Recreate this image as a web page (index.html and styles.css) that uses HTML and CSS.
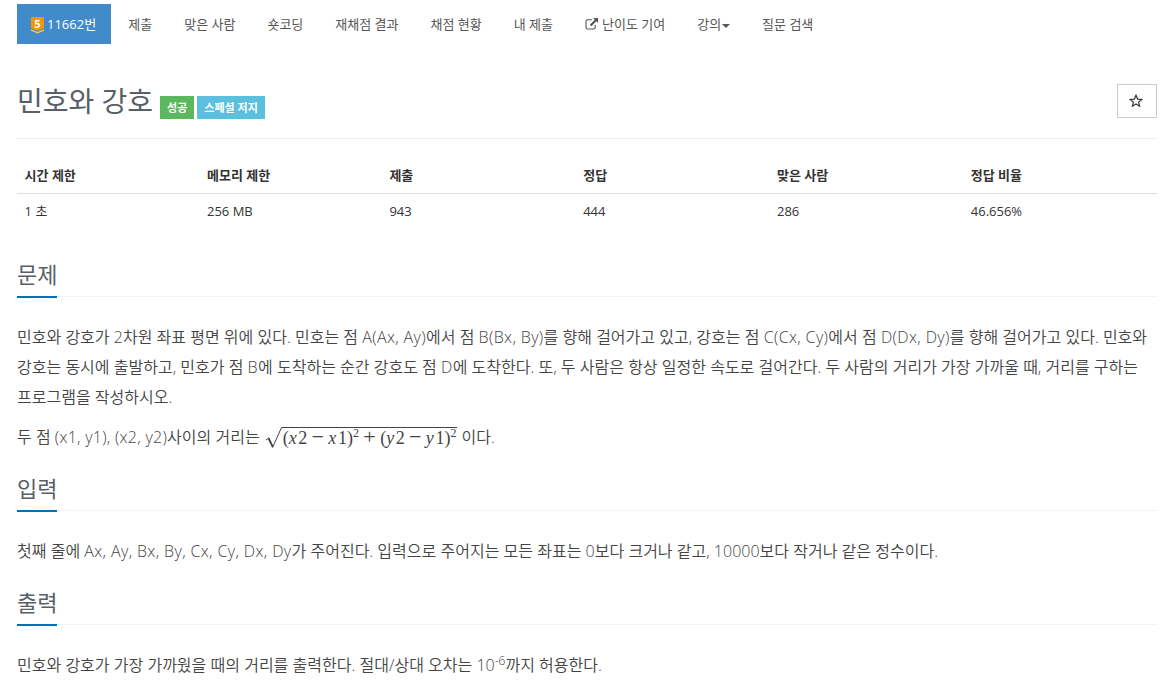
FILE: index.html
```html
<!DOCTYPE html>
<html lang="ko">

<head>
  <meta charset="UTF-8">
  <meta name="viewport" content="width=device-width, initial-scale=1">
  <title>11662번: 민호와 강호</title>
  <link rel="stylesheet" href="styles.css">
</head>

<body>
  <div class="container">
    <ul class="problem-menu">
      <li class="active"><a href="#">
        <svg class="tier" viewBox="0 0 13 17">
          <path d="M0 0h13v11.3L6.5 14 0 11.3z" fill="#ec9a00"/>
          <path d="M0 12.2l6.5 2.7 6.5-2.7v1.5l-6.5 2.9L0 13.7z" fill="#ffc44d"/>
          <text x="6.5" y="10.8" text-anchor="middle">5</text>
        </svg><span>11662번</span></a></li>
      <li><a href="#">제출</a></li>
      <li><a href="#">맞은 사람</a></li>
      <li><a href="#">숏코딩</a></li>
      <li><a href="#">재채점 결과</a></li>
      <li><a href="#">채점 현황</a></li>
      <li><a href="#">내 제출</a></li>
      <li><a href="#">
        <svg class="external" viewBox="0 0 13 12">
          <path d="M7 1.8H2.6Q1 1.8 1 3.4v6Q1 11 2.6 11h6q1.6 0 1.6-1.6V7" fill="none" stroke="#555" stroke-width="1.1"/>
          <path d="M8 0h5v5l-1.7-1.7-4.9 4.9-1.5-1.5 4.9-4.9z" fill="#555"/>
        </svg><span>난이도 기여</span></a></li>
      <li><a href="#">강의<b class="caret"></b></a></li>
      <li><a href="#">질문 검색</a></li>
    </ul>

    <div class="page-header">
      <h1>민호와 강호</h1>
      <span class="label label-success">성공</span>
      <span class="label label-info">스페셜 저지</span>
      <button class="btn-star">
        <svg viewBox="0 0 14 13"><path d="M7 1.2l1.6 3.9 4.2.3-3.2 2.7 1 4.1L7 10l-3.6 2.2 1-4.1-3.2-2.7 4.2-.3z" fill="none" stroke="#333" stroke-width="1.2"/></svg>
      </button>
    </div>

    <table class="info">
      <thead>
        <tr>
          <th class="limit">시간 제한</th>
          <th class="limit">메모리 제한</th>
          <th>제출</th>
          <th>정답</th>
          <th>맞은 사람</th>
          <th>정답 비율</th>
        </tr>
      </thead>
      <tbody>
        <tr>
          <td>1 초</td>
          <td>256 MB</td>
          <td>943</td>
          <td>444</td>
          <td>286</td>
          <td>46.656%</td>
        </tr>
      </tbody>
    </table>

    <section>
      <div class="headline"><h2>문제</h2></div>
      <p>
        <span class="line">민호와 강호가 2차원 좌표 평면 위에 있다. 민호는 점 <span class="latin">A(Ax, Ay)</span>에서 점 <span class="latin">B(Bx, By)</span>를 향해 걸어가고 있고, 강호는 점 <span class="latin">C(Cx, Cy)</span>에서 점 <span class="latin">D(Dx, Dy)</span>를 향해 걸어가고 있다. 민호와</span>
        <span class="line">강호는 동시에 출발하고, 민호가 점 <span class="latin">B</span>에 도착하는 순간 강호도 점 <span class="latin">D</span>에 도착한다. 또, 두 사람은 항상 일정한 속도로 걸어간다. 두 사람의 거리가 가장 가까울 때, 거리를 구하는</span>
        <span class="line">프로그램을 작성하시오.</span>
      </p>
      <p class="distance">
        <span>두 점 <span class="latin">(x1, y1), (x2, y2)</span>사이의 거리는</span>
        <span class="math"><svg class="root" viewBox="0 0 18 22"><path d="M1 13l3-2.2 4 8.7L16.5.5H18" fill="none" stroke="#444" stroke-width="1"/><path d="M3.5 11.5l4.3 9" stroke="#444" stroke-width="1.6"/></svg><span class="radicand">(<i>x</i>2<b>−</b><i>x</i>1)<sup>2</sup><b>+</b>(<i>y</i>2<b>−</b><i>y</i>1)<sup>2</sup></span></span>
        <span>이다.</span>
      </p>
    </section>

    <section>
      <div class="headline"><h2>입력</h2></div>
      <p>첫째 줄에 <span class="latin">Ax, Ay, Bx, By, Cx, Cy, Dx, Dy</span>가 주어진다. 입력으로 주어지는 모든 좌표는 0보다 크거나 같고, 10000보다 작거나 같은 정수이다.</p>
    </section>

    <section>
      <div class="headline"><h2>출력</h2></div>
      <p>민호와 강호가 가장 가까웠을 때의 거리를 출력한다. 절대/상대 오차는 10<sup>-6</sup>까지 허용한다.</p>
    </section>
  </div>
</body>

</html>
```
FILE: styles.css
```css
* {
  box-sizing: border-box;
}

body {
  margin: 0;
  overflow: hidden;
  background: #fff;
  color: #333;
  font-family: "Open Sans", "Noto Sans CJK KR", sans-serif;
  font-size: 13px;
  line-height: 20px;
}

.container {
  width: 1140px;
  margin-left: 17px;
}

.problem-menu {
  display: flex;
  gap: 2px;
  margin: 0;
  padding: 4px 0 0;
  list-style: none;
}

.problem-menu a {
  display: flex;
  align-items: center;
  height: 40px;
  padding: 0 15px;
  color: #555;
  text-decoration: none;
  white-space: nowrap;
}

.problem-menu .active a {
  width: 94px;
  margin-right: 0.3px;
  padding: 0 14px;
  background: #428bca;
  color: #fff;
}

.tier {
  width: 13px;
  height: 17px;
  margin: 2px 3px 0 0;
}

.tier text {
  fill: #fff;
  font-size: 11px;
  font-weight: 700;
}

.external {
  width: 13px;
  height: 12px;
  margin-right: 4px;
}

.caret {
  margin: 3px 0 0 1px;
  border-top: 4px solid #555;
  border-left: 4px solid transparent;
  border-right: 4px solid transparent;
}

.page-header {
  display: flex;
  align-items: flex-start;
  height: 95px;
  padding-top: 40px;
  border-bottom: 1px solid #eee;
}

h1 {
  margin: -1px 7px 0 0;
  color: #585f69;
  font-size: 28px;
  font-weight: 400;
  line-height: 36px;
}

.label {
  height: 23px;
  margin: 12px 3px 0 0;
  padding: 0 7px;
  color: #fff;
  font-size: 11px;
  font-weight: 700;
  line-height: 23px;
}

.label-success {
  background: #5cb85c;
}

.label-info {
  background: #5bc0de;
}

.btn-star {
  display: flex;
  align-items: center;
  justify-content: center;
  width: 40px;
  height: 34px;
  margin-left: auto;
  padding: 0 2px 2px 0;
  border: 1px solid #ccc;
  background: #fff;
}

.btn-star svg {
  width: 14px;
  height: 13px;
}

.info {
  width: 100%;
  margin-top: 18px;
  border-collapse: collapse;
  table-layout: fixed;
}

.info th,
.info td {
  height: 36px;
  padding: 0 8px 0 7.6px;
  text-align: left;
}

.info th {
  width: 17%;
  padding-top: 1px;
  border-bottom: 1px solid #ddd;
}

.info th.limit {
  width: 16%;
}

.headline {
  display: flex;
  height: 49px;
  margin-bottom: 25px;
  border-bottom: 1px dotted #e4e9f0;
}

.info + section {
  padding-top: 19px;
}

h2 {
  height: 50px;
  margin: 0;
  padding-top: 10px;
  border-bottom: 2px solid #0073b7;
  color: #585f69;
  font-size: 22px;
  font-weight: 400;
  line-height: 33px;
}

p {
  margin: 0 0 10px;
  color: #444;
  font-size: 16px;
  font-weight: 350;
  letter-spacing: 0.015px;
  line-height: 30px;
  white-space: nowrap;
}

.line {
  display: block;
}

.latin {
  letter-spacing: 0.37px;
}

.distance .latin {
  letter-spacing: 0.27px;
}

p sup {
  font-size: 12px;
  line-height: 0;
}

.distance {
  display: flex;
  gap: 5px;
  height: 30px;
}

.math {
  display: flex;
  padding-top: 5px;
  color: #444;
}

.root {
  width: 18px;
  height: 22px;
}

.radicand {
  height: 20px;
  border-top: 1px solid #444;
  font-family: "Liberation Serif", serif;
  font-size: 18px;
  font-weight: 400;
  letter-spacing: 0.05px;
  line-height: 20px;
}

.radicand i {
  padding-right: 1.5px;
}

.radicand b {
  margin: 0 4.3px;
  font-size: 22px;
  font-weight: 400;
  line-height: 0;
}
```
